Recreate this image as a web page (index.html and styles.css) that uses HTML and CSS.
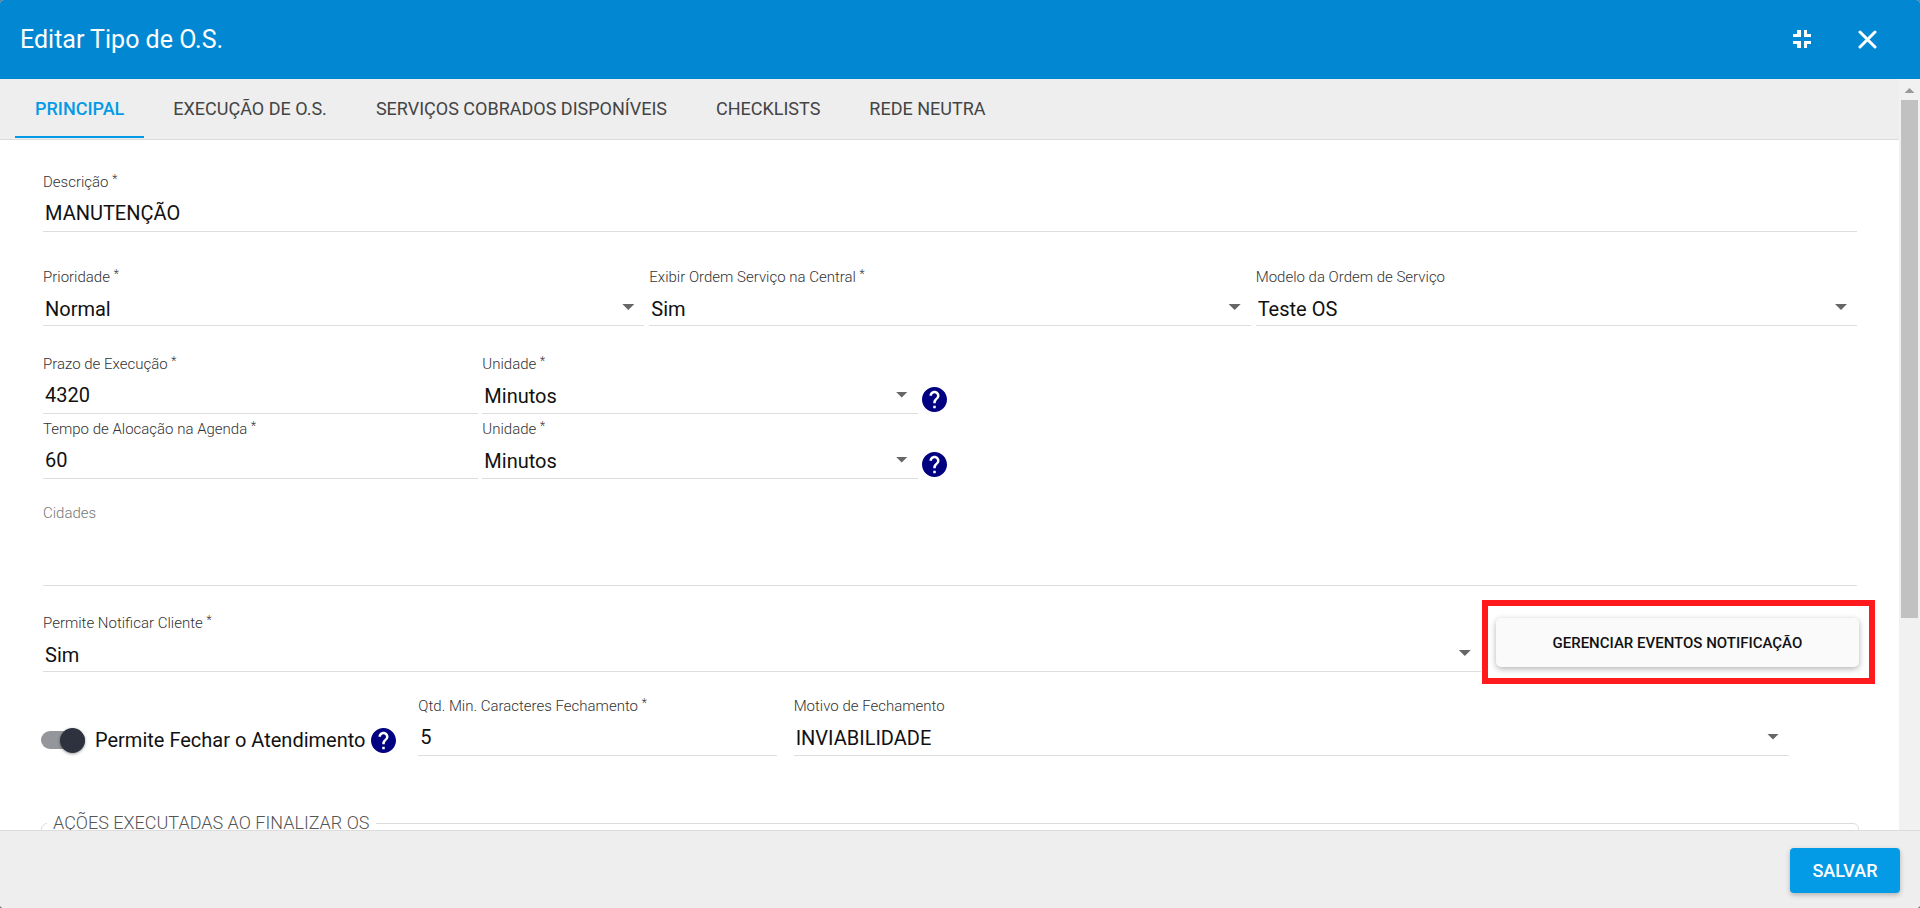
FILE: index.html
```
<!DOCTYPE html>
<html lang="pt-BR">
<head>
    <meta charset="UTF-8">
    <meta name="viewport" content="width=device-width, initial-scale=1.0">
    <title>Editar Tipo de O.S.</title>
    <link rel="stylesheet" href="styles.css">
</head>
<body>
    <svg class="sprite" aria-hidden="true">
        <symbol id="help" viewBox="2 2 20 20">
            <path d="M12 2C6.48 2 2 6.48 2 12s4.48 10 10 10 10-4.48 10-10S17.52 2 12 2zm1 17h-2v-2h2v2zm2.07-7.75l-.9.92C13.45 12.9 13 13.5 13 15h-2v-.5c0-1.1.45-2.1 1.17-2.83l1.24-1.26c.37-.36.59-.86.59-1.41 0-1.1-.9-2-2-2s-2 .9-2 2H8c0-2.21 1.79-4 4-4s4 1.79 4 4c0 .88-.36 1.68-.93 2.25z"/>
        </symbol>
    </svg>

    <div class="dialog" role="dialog" aria-labelledby="dialog-title">
        <header class="dialog-header">
            <h1 id="dialog-title">Editar Tipo de O.S.</h1>
            <button type="button" class="icon-button" aria-label="Restaurar">
                <svg width="20" height="20" viewBox="0 0 20 20" fill="#fff"><path d="M5 0h4v7H1V4h4zM12 0h3v4h4v3h-7zM1 11h8v7H5v-4H1zM12 11h7v3h-4v4h-3z"/></svg>
            </button>
            <button type="button" class="icon-button" aria-label="Fechar">
                <svg width="20" height="20" viewBox="0 0 20 20" fill="none" stroke="#fff" stroke-width="3" stroke-linecap="round"><path d="M3 2l15 15M18 2L3 17"/></svg>
            </button>
        </header>

        <div class="dialog-body">
            <div class="content">
                <nav class="tabs">
                    <a href="#principal" class="tab active">PRINCIPAL</a>
                    <a href="#execucao" class="tab">EXECUÇÃO DE O.S.</a>
                    <a href="#servicos" class="tab">SERVIÇOS COBRADOS DISPONÍVEIS</a>
                    <a href="#checklists" class="tab">CHECKLISTS</a>
                    <a href="#rede" class="tab">REDE NEUTRA</a>
                </nav>

                <form class="form" id="principal">
                    <div class="field row-descricao">
                        <label for="descricao">Descrição <sup>*</sup></label>
                        <input type="text" id="descricao" value="MANUTENÇÃO">
                    </div>

                    <div class="row row-three">
                        <div class="field">
                            <label for="prioridade">Prioridade <sup>*</sup></label>
                            <div class="select"><select id="prioridade"><option>Normal</option></select></div>
                        </div>
                        <div class="field">
                            <label for="exibir">Exibir Ordem Serviço na Central <sup>*</sup></label>
                            <div class="select"><select id="exibir"><option>Sim</option></select></div>
                        </div>
                        <div class="field">
                            <label for="modelo">Modelo da Ordem de Serviço</label>
                            <div class="select"><select id="modelo"><option>Teste OS</option></select></div>
                        </div>
                    </div>

                    <div class="row row-time">
                        <div class="field">
                            <label for="prazo">Prazo de Execução <sup>*</sup></label>
                            <input type="text" id="prazo" value="4320">
                        </div>
                        <div class="field">
                            <label for="prazo-unidade">Unidade <sup>*</sup></label>
                            <div class="select"><select id="prazo-unidade"><option>Minutos</option></select></div>
                        </div>
                        <svg class="help" role="img" aria-label="Ajuda"><use href="#help"/></svg>
                        <div class="field">
                            <label for="tempo">Tempo de Alocação na Agenda <sup>*</sup></label>
                            <input type="text" id="tempo" value="60">
                        </div>
                        <div class="field">
                            <label for="tempo-unidade">Unidade <sup>*</sup></label>
                            <div class="select"><select id="tempo-unidade"><option>Minutos</option></select></div>
                        </div>
                        <svg class="help" role="img" aria-label="Ajuda"><use href="#help"/></svg>
                    </div>

                    <div class="field cidades">
                        <label for="cidades">Cidades</label>
                        <input type="text" id="cidades">
                    </div>

                    <div class="row row-notify">
                        <div class="field">
                            <label for="notificar">Permite Notificar Cliente <sup>*</sup></label>
                            <div class="select"><select id="notificar"><option>Sim</option></select></div>
                        </div>
                        <div class="highlight">
                            <button type="button" class="raised">GERENCIAR EVENTOS NOTIFICAÇÃO</button>
                        </div>
                    </div>

                    <div class="row row-close">
                        <div class="switch">
                            <input type="checkbox" id="fechar" checked>
                            <label for="fechar">Permite Fechar o Atendimento</label>
                            <svg class="help" role="img" aria-label="Ajuda"><use href="#help"/></svg>
                        </div>
                        <div class="field">
                            <label for="qtd">Qtd. Min. Caracteres Fechamento <sup>*</sup></label>
                            <input type="text" id="qtd" value="5">
                        </div>
                        <div class="field">
                            <label for="motivo">Motivo de Fechamento</label>
                            <div class="select"><select id="motivo"><option>INVIABILIDADE</option></select></div>
                        </div>
                    </div>

                    <fieldset class="actions">
                        <legend>AÇÕES EXECUTADAS AO FINALIZAR OS</legend>
                    </fieldset>
                </form>
            </div>

            <div class="scrollbar" aria-hidden="true">
                <div class="scrollbar-arrow"></div>
                <div class="scrollbar-thumb"></div>
            </div>
        </div>

        <footer class="dialog-footer">
            <button type="submit" form="principal" class="save">SALVAR</button>
        </footer>
    </div>
</body>
</html>
```
FILE: styles.css
```
* {
    box-sizing: border-box;
}
body {
    margin: 0;
    background-color: #777;
    font-family: Roboto, sans-serif;
    color: #111;
}
.sprite {
    display: none;
}
button, input, select {
    font-family: inherit;
    color: inherit;
}
.dialog {
    display: flex;
    flex-direction: column;
    height: 100vh;
    border-radius: 4px;
    overflow: hidden;
    background-color: #fff;
}

/* header */
.dialog-header {
    display: flex;
    align-items: center;
    gap: 25px;
    flex: none;
    height: 79px;
    padding: 0 33px 0 20px;
    background-color: #0288d3;
    color: #fff;
}
.dialog-header h1 {
    flex: 1;
    margin: 0;
    font-size: 25px;
    font-weight: 400;
}
.icon-button {
    display: grid;
    place-items: center;
    width: 40px;
    height: 40px;
    padding: 0;
    border: none;
    background: none;
    cursor: pointer;
}

.dialog-body {
    display: flex;
    flex: 1;
    min-height: 0;
}
.content {
    flex: 1;
    min-width: 0;
    overflow: hidden;
}

/* tabs */
.tabs {
    display: flex;
    gap: 9px;
    height: 61px;
    padding: 0 15px;
    border-bottom: 1px solid #dcdcdc;
    background-color: #eee;
}
.tab {
    height: 59px;
    padding: 0 20px;
    font-size: 18px;
    font-weight: 400;
    line-height: 60px;
    color: #444;
    text-decoration: none;
}
.tab.active {
    font-weight: 500;
    color: #039be5;
    border-bottom: 2px solid #039be5;
}

/* form */
.form {
    padding: 32px 42px 0 43px;
}
.row {
    display: grid;
}
.field label {
    display: block;
    height: 18px;
    font-size: 15px;
    font-weight: 300;
    line-height: 20px;
    color: #333;
    white-space: nowrap;
}
.field sup {
    font-size: 12px;
    line-height: 0;
    vertical-align: 4px;
}
.field input, .field select {
    display: block;
    width: 100%;
    height: 42px;
    padding: 5px 2px 0;
    border: none;
    border-bottom: 1px solid #dedede;
    border-radius: 0;
    outline: none;
    background: none;
    font-size: 20px;
    appearance: none;
}
.field select {
    padding-top: 6px;
}
.select {
    display: grid;
    align-items: center;
}
.select select, .select::after {
    grid-area: 1 / 1;
}
.select::after {
    content: "";
    justify-self: end;
    width: 12px;
    height: 6px;
    margin: 3px 10px 0 0;
    background-color: #666;
    clip-path: polygon(0 0, 100% 0, 50% 100%);
    pointer-events: none;
}
.help {
    width: 25px;
    height: 25px;
    fill: #000080;
}
.row-three {
    grid-template-columns: repeat(3, 1fr);
    gap: 5px;
    margin-top: 35px;
}
.row-three select, .row-notify select {
    height: 41px;
    padding-top: 7px;
}
.row-time {
    grid-template-columns: 24% 24% auto;
    gap: 5px 4px;
    margin-top: 28px;
}
.row-time .help {
    margin-top: 33px;
}
.cidades {
    margin-top: 24px;
}
.cidades label {
    color: #777;
}
.cidades input {
    height: 65px;
}
.row-notify {
    grid-template-columns: 1fr 20%;
    gap: 15px;
    align-items: center;
    margin: 27px -2px 0 0;
}
.highlight {
    position: relative;
}
.highlight::after {
    content: "";
    position: absolute;
    inset: -18px -16px -17px -14px;
    border: 6px solid #ff1a1d;
    pointer-events: none;
}
.raised {
    display: block;
    width: 100%;
    height: 49px;
    border: none;
    border-radius: 5px;
    background-color: #fafafa;
    box-shadow: 0 2px 6px rgba(0, 0, 0, 0.3);
    font-size: 15px;
    font-weight: 500;
    cursor: pointer;
}
.row-close {
    grid-template-columns: 18fr 18fr 50fr;
    gap: 17px;
    margin-top: 24px;
    padding-right: 68px;
}
.switch {
    display: flex;
    align-items: center;
    height: 60px;
    margin-left: -2px;
    padding-top: 28px;
    font-size: 20px;
    white-space: nowrap;
}
.switch input {
    display: grid;
    grid-template-rows: 18px;
    flex: none;
    align-items: center;
    justify-items: end;
    width: 44px;
    height: 18px;
    margin: 0 10px 0 0;
    border-radius: 9px;
    background-color: #95969c;
    appearance: none;
}
.switch input::before {
    content: "";
    width: 25px;
    height: 25px;
    border-radius: 50%;
    background-color: #2d323e;
    box-shadow: 0 1px 3px rgba(0, 0, 0, 0.4);
}
.switch .help {
    flex: none;
    margin-left: 6px;
}
.actions {
    height: 300px;
    margin: 56px -2px 0;
    padding: 0 5px;
    border: 1px solid #dcdcdc;
    border-radius: 6px;
}
.actions legend {
    padding: 0 6px;
    font-size: 18px;
    font-weight: 300;
    line-height: 22px;
    color: #555;
}

/* scrollbar */
.scrollbar {
    flex: none;
    width: 21px;
    padding: 0 2px;
    background-color: #f1f1f1;
}
.scrollbar-arrow {
    width: 10px;
    height: 5px;
    margin: 9px auto 7px;
    background-color: #999;
    clip-path: polygon(50% 0, 100% 100%, 0 100%);
}
.scrollbar-thumb {
    height: 69%;
    background-color: #c1c1c1;
}

/* footer */
.dialog-footer {
    display: flex;
    align-items: center;
    justify-content: flex-end;
    flex: none;
    height: 78px;
    padding: 2px 20px 0;
    border-top: 1px solid #dcdcdc;
    background-color: #eee;
}
.save {
    width: 110px;
    height: 45px;
    border: none;
    border-radius: 4px;
    background-color: #039be5;
    box-shadow: 0 2px 5px rgba(0, 0, 0, 0.26);
    color: #fff;
    font-size: 18px;
    font-weight: 500;
    cursor: pointer;
}
```
